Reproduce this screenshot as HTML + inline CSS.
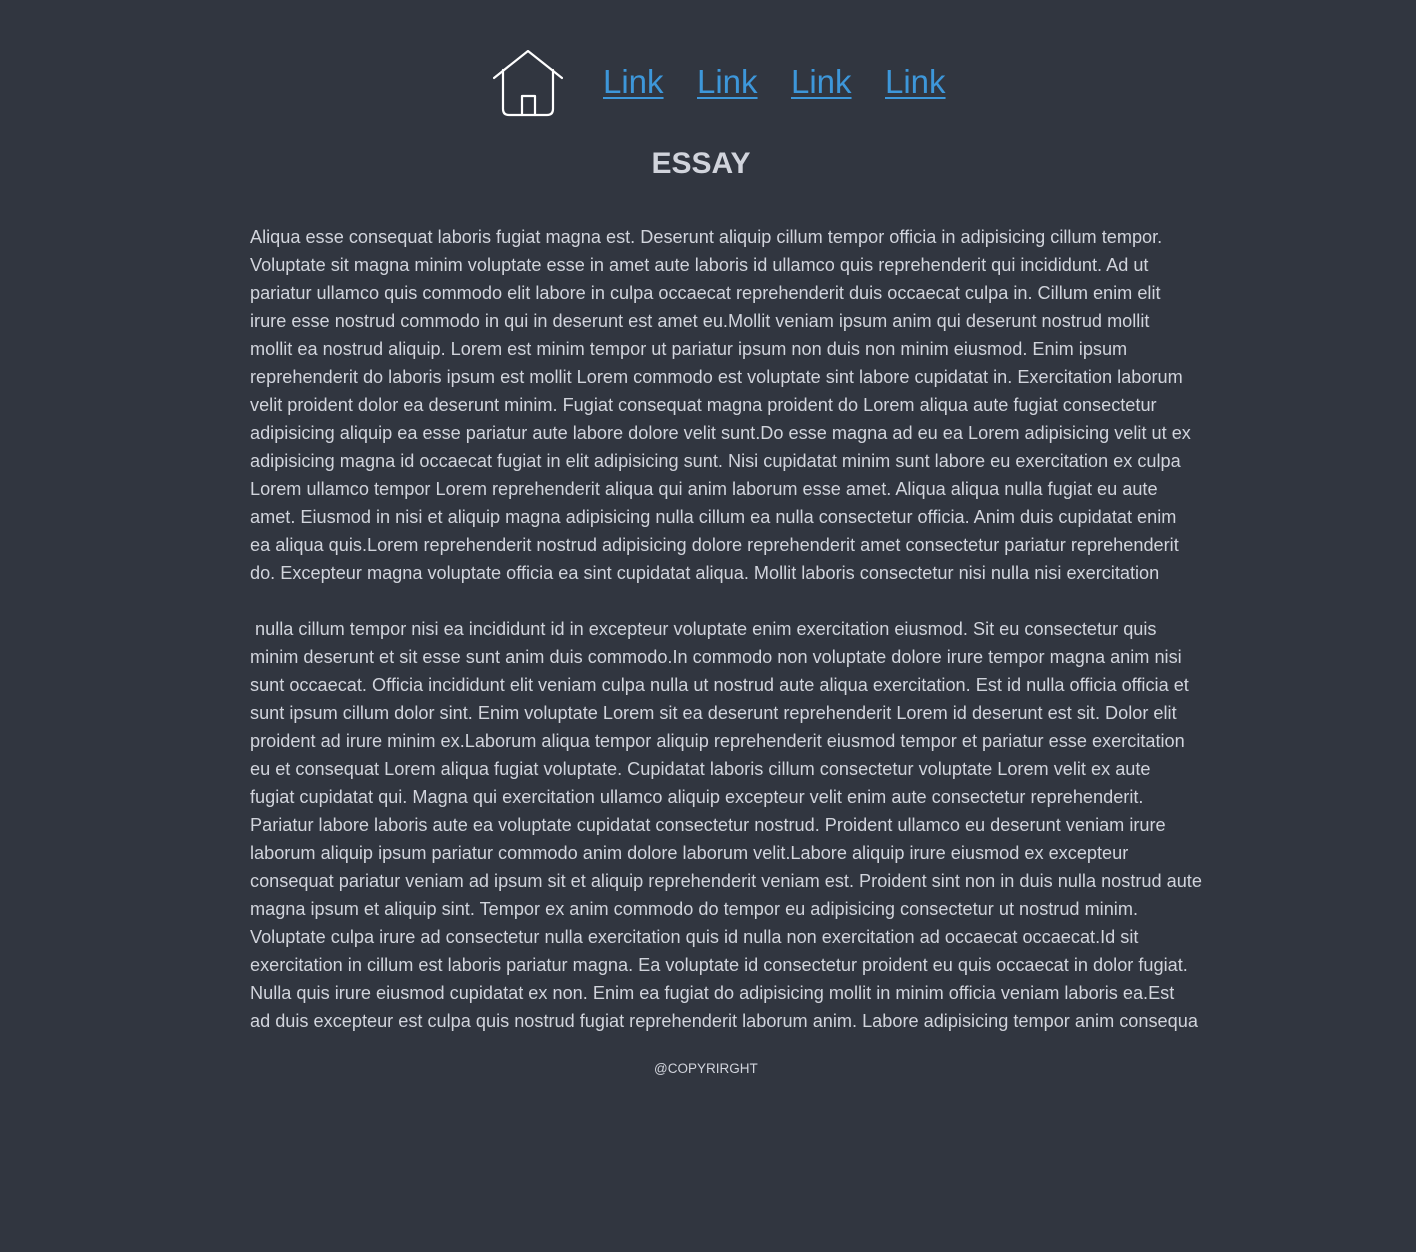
<!DOCTYPE html>
<html><head><meta charset="utf-8"><style>
html,body{margin:0;padding:0;background:#313640;width:1416px;height:1252px;overflow:hidden;font-family:"Liberation Sans",Arial,sans-serif;}
.nav{position:absolute;top:50px;left:0;width:1416px;height:70px;}
.nav svg{position:absolute;left:493px;top:0;}
.nav a{position:absolute;top:32px;color:#3d97da;font-size:33px;text-decoration:underline;text-decoration-thickness:2px;text-underline-offset:4px;line-height:0;}
h1{position:absolute;top:146px;left:0;width:1402px;text-align:center;margin:0;color:#d1d4dc;font-size:30px;font-weight:bold;line-height:36px;}
.t{position:absolute;left:250px;top:223px;color:#d1d4dc;font-size:18.15px;}
.t div{height:28px;line-height:28px;white-space:nowrap;}
.c{position:absolute;top:1060px;left:654px;color:#d1d4dc;font-size:13.5px;line-height:18px;}
</style></head><body>
<div class="nav">
<svg width="70" height="68" viewBox="0 0 70 68"><g fill="none" stroke="#fff" stroke-width="2.2" stroke-linejoin="round" stroke-linecap="round"><path d="M1 28 L35 1 L69 28"/><path d="M10 20 V59 Q10 65 16 65 H54 Q60 65 60 59 V20"/><path d="M29 65 V46 H42 V65"/></g></svg>
<a style="left:603px">Link</a><a style="left:697px">Link</a><a style="left:791px">Link</a><a style="left:885px">Link</a>
</div>
<h1>ESSAY</h1>
<div class="t">
<div>Aliqua esse consequat laboris fugiat magna est. Deserunt aliquip cillum tempor officia in adipisicing cillum tempor.</div>
<div>Voluptate sit magna minim voluptate esse in amet aute laboris id ullamco quis reprehenderit qui incididunt. Ad ut</div>
<div>pariatur ullamco quis commodo elit labore in culpa occaecat reprehenderit duis occaecat culpa in. Cillum enim elit</div>
<div>irure esse nostrud commodo in qui in deserunt est amet eu.Mollit veniam ipsum anim qui deserunt nostrud mollit</div>
<div>mollit ea nostrud aliquip. Lorem est minim tempor ut pariatur ipsum non duis non minim eiusmod. Enim ipsum</div>
<div>reprehenderit do laboris ipsum est mollit Lorem commodo est voluptate sint labore cupidatat in. Exercitation laborum</div>
<div>velit proident dolor ea deserunt minim. Fugiat consequat magna proident do Lorem aliqua aute fugiat consectetur</div>
<div>adipisicing aliquip ea esse pariatur aute labore dolore velit sunt.Do esse magna ad eu ea Lorem adipisicing velit ut ex</div>
<div>adipisicing magna id occaecat fugiat in elit adipisicing sunt. Nisi cupidatat minim sunt labore eu exercitation ex culpa</div>
<div>Lorem ullamco tempor Lorem reprehenderit aliqua qui anim laborum esse amet. Aliqua aliqua nulla fugiat eu aute</div>
<div>amet. Eiusmod in nisi et aliquip magna adipisicing nulla cillum ea nulla consectetur officia. Anim duis cupidatat enim</div>
<div>ea aliqua quis.Lorem reprehenderit nostrud adipisicing dolore reprehenderit amet consectetur pariatur reprehenderit</div>
<div>do. Excepteur magna voluptate officia ea sint cupidatat aliqua. Mollit laboris consectetur nisi nulla nisi exercitation</div>
<div></div>
<div>&nbsp;nulla cillum tempor nisi ea incididunt id in excepteur voluptate enim exercitation eiusmod. Sit eu consectetur quis</div>
<div>minim deserunt et sit esse sunt anim duis commodo.In commodo non voluptate dolore irure tempor magna anim nisi</div>
<div>sunt occaecat. Officia incididunt elit veniam culpa nulla ut nostrud aute aliqua exercitation. Est id nulla officia officia et</div>
<div>sunt ipsum cillum dolor sint. Enim voluptate Lorem sit ea deserunt reprehenderit Lorem id deserunt est sit. Dolor elit</div>
<div>proident ad irure minim ex.Laborum aliqua tempor aliquip reprehenderit eiusmod tempor et pariatur esse exercitation</div>
<div>eu et consequat Lorem aliqua fugiat voluptate. Cupidatat laboris cillum consectetur voluptate Lorem velit ex aute</div>
<div>fugiat cupidatat qui. Magna qui exercitation ullamco aliquip excepteur velit enim aute consectetur reprehenderit.</div>
<div>Pariatur labore laboris aute ea voluptate cupidatat consectetur nostrud. Proident ullamco eu deserunt veniam irure</div>
<div>laborum aliquip ipsum pariatur commodo anim dolore laborum velit.Labore aliquip irure eiusmod ex excepteur</div>
<div>consequat pariatur veniam ad ipsum sit et aliquip reprehenderit veniam est. Proident sint non in duis nulla nostrud aute</div>
<div>magna ipsum et aliquip sint. Tempor ex anim commodo do tempor eu adipisicing consectetur ut nostrud minim.</div>
<div>Voluptate culpa irure ad consectetur nulla exercitation quis id nulla non exercitation ad occaecat occaecat.Id sit</div>
<div>exercitation in cillum est laboris pariatur magna. Ea voluptate id consectetur proident eu quis occaecat in dolor fugiat.</div>
<div>Nulla quis irure eiusmod cupidatat ex non. Enim ea fugiat do adipisicing mollit in minim officia veniam laboris ea.Est</div>
<div>ad duis excepteur est culpa quis nostrud fugiat reprehenderit laborum anim. Labore adipisicing tempor anim consequa</div>
</div>
<div class="c">@COPYRIRGHT</div>
</body></html>
